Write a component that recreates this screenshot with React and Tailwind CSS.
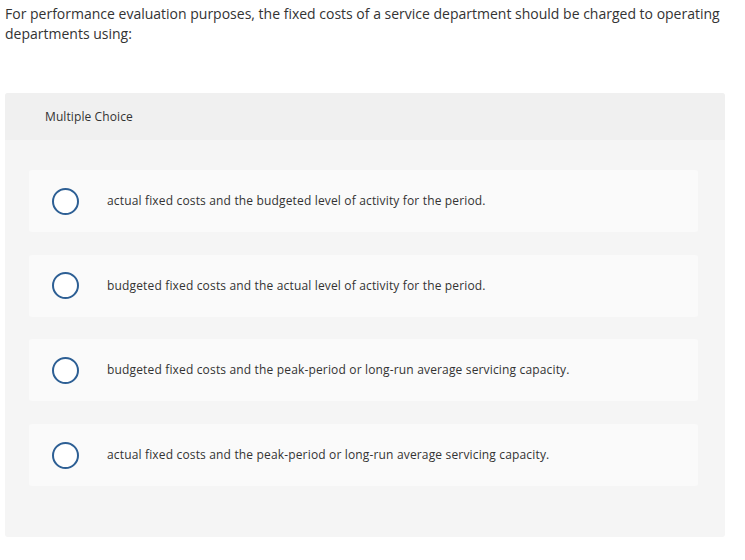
export default function App() {
  const options = [
    "actual fixed costs and the budgeted level of activity for the period.",
    "budgeted fixed costs and the actual level of activity for the period.",
    "budgeted fixed costs and the peak-period or long-run average servicing capacity.",
    "actual fixed costs and the peak-period or long-run average servicing capacity.",
  ];
  return (
    <div className="w-[745px] h-[560px] bg-white text-[#333] font-['Open_Sans','Liberation_Sans',sans-serif]">
      <p className="pl-[5px] pr-[10px] pt-[4px] text-[14px] leading-[20px]">
        For performance evaluation purposes, the fixed costs of a service department should be charged to operating departments using:
      </p>
      <div className="ml-[5px] mt-[49px] w-[720px] rounded-[3px] bg-[#f5f5f5] pb-[51px]">
        <div className="h-[47px] rounded-t-[3px] bg-[#f0f0f0] pl-[40px] flex items-center text-[12px] tracking-[0.1px]">
          Multiple Choice
        </div>
        <div className="mt-[30px] flex flex-col gap-[22.7px] pl-[24px] pr-[27px]">
          {options.map((o) => (
            <div key={o} className="h-[62px] rounded-[3px] bg-[#fafafa] flex items-center">
              <div className="ml-[23px] w-[27px] h-[27px] rounded-full border-2 border-[#2d5f94] bg-white shrink-0" />
              <span className="ml-[28px] text-[12px] tracking-[0.16px]">{o}</span>
            </div>
          ))}
        </div>
      </div>
    </div>
  );
}
